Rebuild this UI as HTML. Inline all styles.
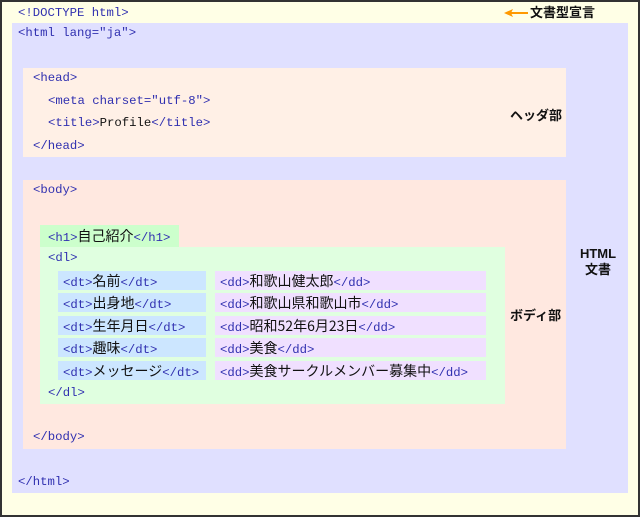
<!DOCTYPE html>
<html><head><meta charset="utf-8"><style>
*{margin:0;padding:0}
body{width:640px;height:517px;position:relative;overflow:hidden;background:#fff;font-family:"Liberation Mono","Noto Sans CJK JP",monospace;font-size:12.3px;}
.b{position:absolute}
.t{position:absolute;color:#3030b0;white-space:nowrap;line-height:16px}
.t span{color:#111;font-family:"Noto Sans CJK JP",sans-serif;font-size:14px}
.t span.p{font-family:"Liberation Mono",monospace;font-size:12.3px}
.l{position:absolute;font-family:"Liberation Sans","Noto Sans CJK JP",sans-serif;font-weight:bold;font-size:13px;color:#111;white-space:nowrap;line-height:16px}
</style></head><body>
<div class="b" style="left:0;top:0;width:636px;height:513px;border:2px solid #333;background:#ffffe6"></div>
<div class="b" style="left:12px;top:23px;width:616px;height:470px;background:#e0e0ff"></div>
<div class="b" style="left:23px;top:68px;width:543px;height:89px;background:#fff0e6"></div>
<div class="b" style="left:23px;top:180px;width:543px;height:269px;background:#ffe8e0"></div>
<div class="b" style="left:40px;top:225px;width:139px;height:22px;background:#ccffcc"></div>
<div class="b" style="left:40px;top:247px;width:465px;height:157px;background:#e0ffe0"></div>
<div class="b" style="left:58px;top:271px;width:148px;height:19px;background:#cce6ff"></div>
<div class="b" style="left:58px;top:293px;width:148px;height:19px;background:#cce6ff"></div>
<div class="b" style="left:58px;top:316px;width:148px;height:19px;background:#cce6ff"></div>
<div class="b" style="left:58px;top:338px;width:148px;height:19px;background:#cce6ff"></div>
<div class="b" style="left:58px;top:361px;width:148px;height:19px;background:#cce6ff"></div>
<div class="b" style="left:215px;top:271px;width:271px;height:19px;background:#f0e0ff"></div>
<div class="b" style="left:215px;top:293px;width:271px;height:19px;background:#f0e0ff"></div>
<div class="b" style="left:215px;top:316px;width:271px;height:19px;background:#f0e0ff"></div>
<div class="b" style="left:215px;top:338px;width:271px;height:19px;background:#f0e0ff"></div>
<div class="b" style="left:215px;top:361px;width:271px;height:19px;background:#f0e0ff"></div>

<div class="t" style="left:18px;top:5px">&lt;!DOCTYPE html&gt;</div>
<div class="t" style="left:18px;top:25px">&lt;html lang=″ja″&gt;</div>
<div class="t" style="left:33px;top:70px">&lt;head&gt;</div>
<div class="t" style="left:48px;top:93px">&lt;meta charset=″utf-8″&gt;</div>
<div class="t" style="left:48px;top:115px">&lt;title&gt;<span class="p">Profile</span>&lt;/title&gt;</div>
<div class="t" style="left:33px;top:138px">&lt;/head&gt;</div>
<div class="t" style="left:33px;top:182px">&lt;body&gt;</div>
<div class="t" style="left:48px;top:228px">&lt;h1&gt;<span>自己紹介</span>&lt;/h1&gt;</div>
<div class="t" style="left:48px;top:250px">&lt;dl&gt;</div>
<div class="t" style="left:63px;top:273px">&lt;dt&gt;<span>名前</span>&lt;/dt&gt;</div>
<div class="t" style="left:63px;top:295px">&lt;dt&gt;<span>出身地</span>&lt;/dt&gt;</div>
<div class="t" style="left:63px;top:318px">&lt;dt&gt;<span>生年月日</span>&lt;/dt&gt;</div>
<div class="t" style="left:63px;top:340px">&lt;dt&gt;<span>趣味</span>&lt;/dt&gt;</div>
<div class="t" style="left:63px;top:363px">&lt;dt&gt;<span>メッセージ</span>&lt;/dt&gt;</div>
<div class="t" style="left:220px;top:273px">&lt;dd&gt;<span>和歌山健太郎</span>&lt;/dd&gt;</div>
<div class="t" style="left:220px;top:295px">&lt;dd&gt;<span>和歌山県和歌山市</span>&lt;/dd&gt;</div>
<div class="t" style="left:220px;top:318px">&lt;dd&gt;<span>昭和52年6月23日</span>&lt;/dd&gt;</div>
<div class="t" style="left:220px;top:340px">&lt;dd&gt;<span>美食</span>&lt;/dd&gt;</div>
<div class="t" style="left:220px;top:363px">&lt;dd&gt;<span>美食サークルメンバー募集中</span>&lt;/dd&gt;</div>
<div class="t" style="left:48px;top:385px">&lt;/dl&gt;</div>
<div class="t" style="left:33px;top:429px">&lt;/body&gt;</div>
<div class="t" style="left:18px;top:474px">&lt;/html&gt;</div>

<svg class="b" style="left:503px;top:8px" width="26" height="10"><path d="M25 5H8" stroke="#f90" stroke-width="2"/><path d="M1 5L10 1L8 5L10 9Z" fill="#f90"/></svg>
<div class="l" style="left:530px;top:5px">文書型宣言</div>
<div class="l" style="left:510px;top:108px">ヘッダ部</div>
<div class="l" style="left:510px;top:308px">ボディ部</div>
<div class="l" style="left:578px;top:246px;text-align:center;width:40px">HTML<br>文書</div>
</body></html>
